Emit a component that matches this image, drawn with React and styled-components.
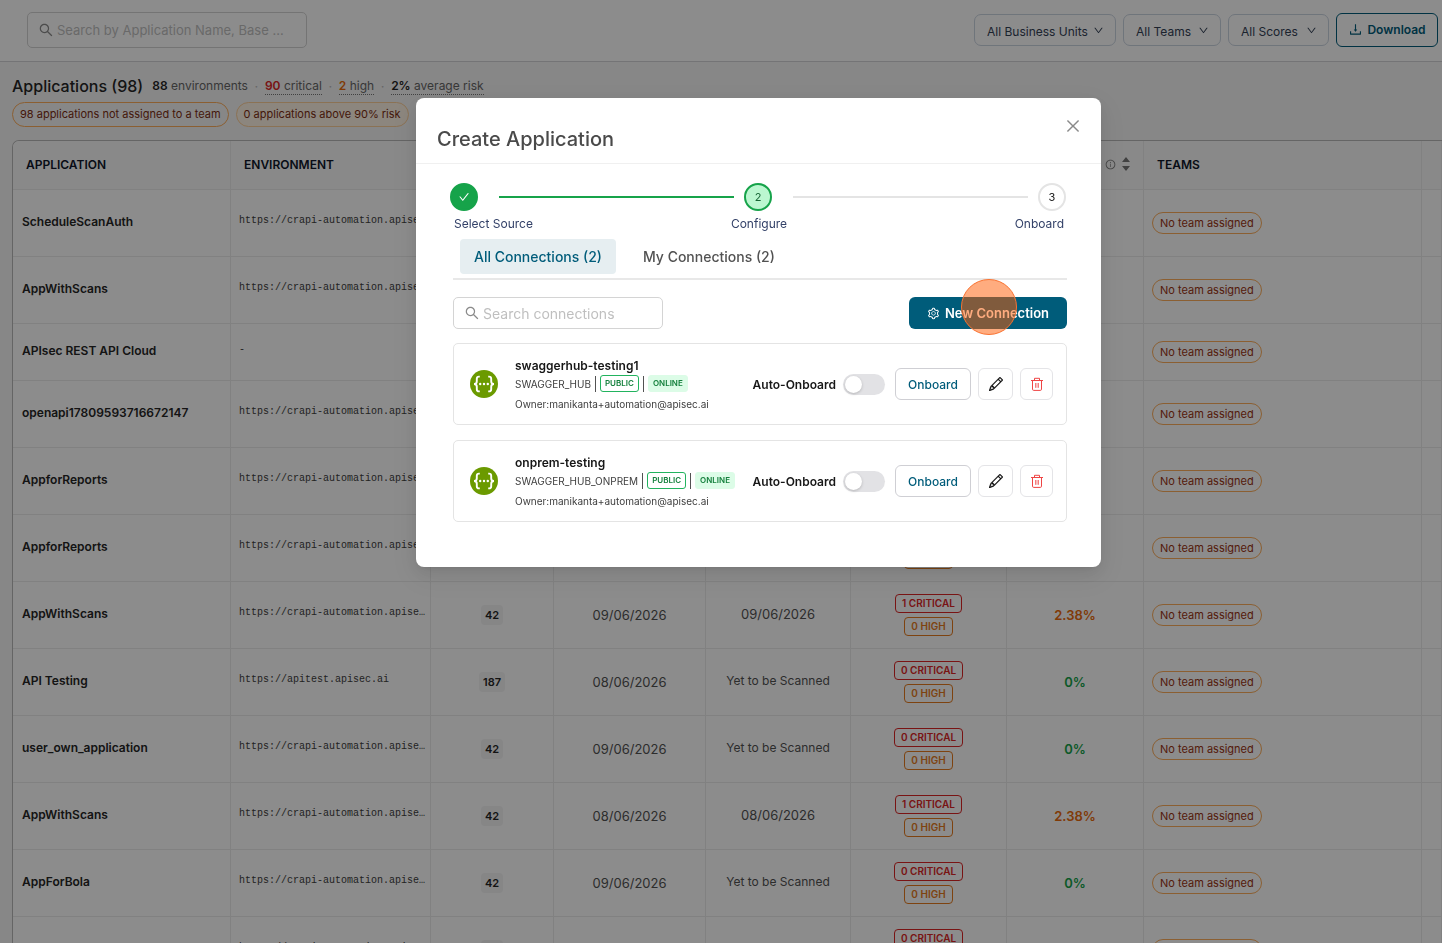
import React from 'react';
import {
  AiOutlineCheck,
  AiOutlineClose,
  AiOutlineDown,
  AiOutlineDownload,
  AiOutlineInfoCircle,
  AiOutlineSearch,
  AiOutlineSetting,
} from 'react-icons/ai';
import { BsPencil } from 'react-icons/bs';
import styled, { createGlobalStyle } from 'styled-components';

const GlobalStyle = createGlobalStyle`
  * {
    box-sizing: border-box;
  }
  body {
    margin: 0;
    background: #f6f6f6;
    color: #262626;
    font-family: Inter, 'Open Sans', sans-serif;
    font-size: 13px;
  }
  button, input, select {
    font-family: inherit;
  }
`;

const StyledPage = styled.div`
  height: 100vh;
  overflow: hidden;
`;

const StyledTopBar = styled.header`
  display: flex;
  align-items: center;
  justify-content: space-between;
  height: 62px;
  padding: 0 4px 2px 27px;
  background: #fff;
  border-bottom: 1px solid #d4d4d8;
`;

const StyledSearch = styled.label`
  display: flex;
  align-items: center;
  gap: 3px;
  width: ${({ $width }) => $width}px;
  height: ${({ $height }) => $height}px;
  padding: 0 10px;
  border: 1px solid #d4d4d4;
  border-radius: 5px;
  background: #fff;
  color: #8a8a8a;

  svg {
    flex: none;
  }
  input {
    flex: 1;
    min-width: 0;
    padding: 0;
    border: 0;
    outline: 0;
    background: transparent;
    font-size: ${({ $fontSize }) => $fontSize || 14}px;
  }
  input::placeholder {
    color: #bfbfbf;
  }
`;

const StyledFilters = styled.div`
  display: flex;
  align-items: center;
  gap: 7px;
`;

const StyledSelect = styled.div`
  position: relative;
  color: #334155;

  select {
    width: ${({ $width }) => $width}px;
    height: 32px;
    padding: 3px 12px 0;
    appearance: none;
    border: 1px solid #cbd5e1;
    border-radius: 7px;
    background: #fff;
    color: inherit;
    font-size: 12px;
  }
  svg {
    position: absolute;
    top: 11px;
    right: 12px;
    pointer-events: none;
  }
`;

const StyledDownload = styled.button`
  display: flex;
  align-items: center;
  justify-content: center;
  gap: 4px;
  width: 102px;
  height: 34px;
  padding: 0;
  border: 1px solid #005c7a;
  border-radius: 6px;
  background: #fff;
  color: #005c7a;
  font-size: 12px;
  font-weight: 600;
`;

const StyledSummary = styled.section`
  padding: 14px 12px 0;
`;

const StyledSummaryRow = styled.div`
  display: flex;
  align-items: center;
  height: 20px;

  h1 {
    margin: 0 9px 0 0;
    font-size: 16px;
    font-weight: 500;
  }
`;

const StyledStat = styled.span`
  color: #666;
  font-size: 12px;
  line-height: 16px;
  white-space: nowrap;
  border-bottom: 1px ${({ $plain }) => ($plain ? 'solid transparent' : 'dotted #777')};

  b {
    color: ${({ $color }) => $color || '#262626'};
    font-weight: 600;
  }
`;

const StyledDot = styled.span`
  width: 17px;
  color: #bbb;
  text-align: center;
`;

const StyledPills = styled.div`
  display: flex;
  gap: 7px;
  margin-top: 6px;
`;

const StyledPill = styled.span`
  display: inline-block;
  padding: 0 7px;
  border: 1px solid ${({ $soft }) => ($soft ? '#fdcf9a' : '#fdae5c')};
  border-radius: 13px;
  background: ${({ $soft }) => ($soft ? '#fff4e5' : 'transparent')};
  color: #7c2d12;
  font-size: 11px;
  line-height: 23px;
  white-space: nowrap;
`;

const StyledTableBox = styled.div`
  margin: 13px 0 0 12px;
  border: 1px solid #b8b8b8;
  border-right: 0;
  border-radius: 7px 0 0 0;
  background: #fff;
  overflow: hidden;
`;

const StyledTable = styled.table`
  width: 100%;
  table-layout: fixed;
  border-collapse: separate;
  border-spacing: 0;

  th {
    height: 49px;
    padding: 0 13px 2px;
    border-right: 1px solid #ececec;
    border-bottom: 1px solid #ececec;
    background: #fafafa;
    color: #0f172a;
    font-size: 12px;
    font-weight: 600;
    text-align: left;
    white-space: nowrap;
    overflow: hidden;
  }
  td {
    padding: 0 8px 1px;
    border-right: 1px solid #ececec;
    border-bottom: 1px solid #ececec;
    color: #525252;
    text-align: center;
    white-space: nowrap;
  }
  td:nth-child(-n + 2),
  td:nth-child(8) {
    text-align: left;
  }
`;

const StyledRow = styled.tr`
  height: ${({ $short }) => ($short ? 57 : 67)}px;
`;

const StyledName = styled.span`
  display: block;
  padding: 0 0 1px 1px;
  color: #262626;
  font-size: 12px;
  font-weight: 600;
  line-height: 18px;
`;

const StyledUrl = styled.span`
  display: block;
  padding-bottom: 3px;
  color: #404040;
  font-family: 'Liberation Mono', monospace;
  font-size: 10px;
  line-height: 16px;
`;

const StyledCount = styled.span`
  display: inline-block;
  padding: 0 4px;
  border-radius: 4px;
  background: #f4f4f5;
  color: #262626;
  font-size: 11px;
  font-weight: 600;
  line-height: 20px;
`;

const StyledScanned = styled.span`
  display: block;
  padding-bottom: 2px;
  font-size: ${({ $pending }) => ($pending ? 12 : 13)}px;
  line-height: 18px;
`;

const StyledSeverities = styled.div`
  display: flex;
  flex-direction: column;
  align-items: center;
  gap: 4px;
`;

const StyledSeverity = styled.span`
  padding: 0 6px 1px;
  border: 1px solid currentColor;
  border-radius: 4px;
  color: ${({ $critical }) => ($critical ? '#dc2626' : '#e57b1e')};
  font-size: 10px;
  font-weight: 600;
  line-height: 16px;
`;

const StyledRisk = styled.span`
  color: ${({ $high }) => ($high ? '#ea6a0c' : '#16a34a')};
  font-size: 13px;
  font-weight: 600;
`;

const StyledTeam = styled.span`
  display: inline-block;
  padding: 0 7px;
  border: 1px solid #fdae5c;
  border-radius: 11px;
  color: #9a3412;
  font-size: 11px;
  line-height: 20px;
`;

const StyledRiskHead = styled.span`
  display: flex;
  align-items: center;
  justify-content: flex-end;
  gap: 6px;
  color: #777;
`;

const StyledMask = styled.div`
  position: fixed;
  inset: 0;
  display: flex;
  align-items: flex-start;
  justify-content: center;
  padding: 98px 0 0 75px;
  background: rgba(0, 0, 0, 0.45);
`;

const StyledModal = styled.div`
  width: 685px;
  padding-bottom: 45px;
  border-radius: 8px;
  background: #fff;
  box-shadow: 0 6px 16px rgba(0, 0, 0, 0.08), 0 3px 6px -4px rgba(0, 0, 0, 0.12),
    0 9px 28px 8px rgba(0, 0, 0, 0.05);
`;

const StyledModalHeader = styled.div`
  display: flex;
  justify-content: space-between;
  height: 66px;
  padding: 19px 19px 0 21px;
  border-bottom: 1px solid #f0f0f0;

  h2 {
    margin: 8px 0 0;
    color: #4a4a4a;
    font-size: 20px;
    font-weight: 500;
    line-height: 28px;
  }
`;

const StyledClose = styled.button`
  display: flex;
  height: 18px;
  padding: 0;
  border: 0;
  background: none;
  color: #8a8a8a;
`;

const StyledModalBody = styled.div`
  padding: 19px 34px 0 37px;
`;

const StyledSteps = styled.div`
  display: flex;
  align-items: center;
  margin: 0 1px 0 -3px;
`;

const StyledStepCircle = styled.span`
  display: flex;
  flex: none;
  align-items: center;
  justify-content: center;
  width: 28px;
  height: 28px;
  border: 2px solid ${({ $state }) => ($state === 'todo' ? '#e4e4e4' : '#16a34a')};
  border-radius: 50%;
  background: ${({ $state }) => ({ done: '#16a34a', current: '#bbf7d0', todo: '#fff' })[$state]};
  color: ${({ $state }) => ({ done: '#fff', current: '#166534', todo: '#171717' })[$state]};
  font-size: 11px;
`;

const StyledStepLine = styled.span`
  flex: 1;
  height: 2px;
  margin: 0 10px 0 21px;
  background: ${({ $done }) => ($done ? '#16a34a' : '#e4e4e4')};
`;

const StyledStepLabels = styled.div`
  display: grid;
  grid-template-columns: 1fr auto 1fr;
  padding: 4px 3px 0 1px;
  color: #334168;
  font-size: 12px;
  line-height: 18px;

  span:last-child {
    text-align: right;
  }
`;

const StyledTabs = styled.div`
  display: flex;
  gap: 13px;
  padding: 6px 7px 4px;
  border-bottom: 2px solid #e8e8e8;
`;

const StyledTab = styled.button`
  height: 35px;
  padding: 0 14px;
  border: 0;
  border-radius: 4px;
  background: ${({ $active }) => ($active ? '#e6eef1' : 'none')};
  color: ${({ $active }) => ($active ? '#005c7a' : '#525252')};
  font-size: 14px;
  font-weight: 500;
`;

const StyledToolbar = styled.div`
  display: flex;
  justify-content: space-between;
  padding: 17px 0 14px;
`;

const StyledNewConnection = styled.div`
  position: relative;

  button {
    display: flex;
    align-items: center;
    justify-content: center;
    gap: 5px;
    width: 158px;
    height: 32px;
    padding: 0;
    border: 0;
    border-radius: 6px;
    background: #005c7a;
    color: #fff;
    font-size: 13px;
    font-weight: 600;
  }
`;

const StyledPointer = styled.span`
  position: absolute;
  top: -18px;
  left: 52px;
  width: 56px;
  height: 56px;
  border: 1px solid #f97332;
  border-radius: 50%;
  background: rgba(255, 89, 0, 0.5);
  pointer-events: none;
`;

const StyledCards = styled.div`
  display: flex;
  flex-direction: column;
  gap: 15px;
`;

const StyledCard = styled.article`
  display: flex;
  align-items: center;
  height: 82px;
  padding: 0 13px 0 16px;
  border: 1px solid #e4e4e4;
  border-radius: 5px;
`;

const StyledInfo = styled.div`
  flex: 1;
  margin-left: 17px;

  h3 {
    margin: 0;
    color: #171717;
    font-size: 12px;
    font-weight: 600;
    line-height: 18px;
  }
  p {
    margin: 3px 0 0;
    color: #404040;
    font-size: 10px;
    line-height: 16px;
  }
`;

const StyledMeta = styled.div`
  display: flex;
  align-items: center;
  gap: 4px;
  height: 18px;
  color: #404040;
  font-size: 10px;
  white-space: nowrap;
`;

const StyledDivider = styled.span`
  width: 1px;
  height: 16px;
  background: #525252;
`;

const StyledTag = styled.span`
  padding: 0 4px;
  border: 1px solid ${({ $filled }) => ($filled ? '#dcfce7' : '#22b35e')};
  border-radius: 3px;
  background: ${({ $filled }) => ($filled ? '#dcfce7' : '#fff')};
  color: #15803d;
  font-size: 8px;
  font-weight: 600;
  line-height: 15px;
`;

const StyledSwitch = styled.label`
  display: flex;
  align-items: center;
  gap: 7px;
  color: #171717;
  font-size: 12px;
  font-weight: 600;

  input {
    width: 42px;
    height: 21px;
    margin: 0;
    padding: 2px;
    appearance: none;
    border-radius: 11px;
    background: #e2e2e5;
  }
  input::before {
    content: '';
    display: block;
    width: 17px;
    height: 17px;
    border-radius: 50%;
    background: #fff;
    box-shadow: 0 1px 3px rgba(0, 0, 0, 0.2);
  }
  input:checked::before {
    margin-left: auto;
  }
`;

const StyledAction = styled.button`
  display: flex;
  align-items: center;
  justify-content: center;
  width: ${({ $width }) => $width}px;
  height: 32px;
  margin-left: ${({ $gap }) => $gap || 7}px;
  padding: 0;
  border: 1px solid ${({ $strong }) => ($strong ? '#cfcfd4' : '#e4e4e7')};
  border-radius: 6px;
  background: #fff;
  color: ${({ $color }) => $color};
  font-size: 12px;
  font-weight: 500;
`;

const URL = 'https://crapi-automation.apise…';

const columns = [218, 200, 123, 152, 145, 156, 137, 278];

const applications = [
  { name: 'ScheduleScanAuth', url: URL, count: 42, created: '09/06/2026', critical: 0 },
  { name: 'AppWithScans', url: URL, count: 42, created: '09/06/2026', critical: 0 },
  { name: 'APIsec REST API Cloud', url: '-', count: 42, created: '09/06/2026', critical: 0, short: true },
  { name: 'openapi17809593716672147', url: URL, count: 42, created: '09/06/2026', critical: 0 },
  { name: 'AppforReports', url: URL, count: 42, created: '09/06/2026', critical: 0 },
  { name: 'AppforReports', url: URL, count: 42, created: '09/06/2026', critical: 0 },
  { name: 'AppWithScans', url: URL, count: 42, created: '09/06/2026', scanned: '09/06/2026', critical: 1 },
  { name: 'API Testing', url: 'https://apitest.apisec.ai', count: 187, created: '08/06/2026', critical: 0 },
  { name: 'user_own_application', url: URL, count: 42, created: '09/06/2026', critical: 0 },
  { name: 'AppWithScans', url: URL, count: 42, created: '08/06/2026', scanned: '08/06/2026', critical: 1 },
  { name: 'AppForBola', url: URL, count: 42, created: '09/06/2026', critical: 0 },
  { name: 'AppForBola', url: URL, count: 42, created: '09/06/2026', critical: 0 },
];

const connections = [
  { name: 'swaggerhub-testing1', type: 'SWAGGER_HUB' },
  { name: 'onprem-testing', type: 'SWAGGER_HUB_ONPREM' },
];

const SwaggerLogo = () => (
  <svg width="28" height="28" viewBox="0 0 28 28" aria-hidden="true">
    <circle cx="14" cy="14" r="14" fill="#6b9a00" />
    <g fill="none" stroke="#fff" strokeWidth="1.9">
      <path d="M9.8 6.6H9Q6.8 6.6 6.8 8.8V11.2Q6.8 14 4 14Q6.8 14 6.8 16.8V19.2Q6.8 21.4 9 21.4H9.8" />
      <path d="M18.2 6.6H19Q21.2 6.6 21.2 8.8V11.2Q21.2 14 24 14Q21.2 14 21.2 16.8V19.2Q21.2 21.4 19 21.4H18.2" />
    </g>
    <g fill="#fff">
      <circle cx="10.2" cy="14" r="1.2" />
      <circle cx="14" cy="14" r="1.2" />
      <circle cx="17.8" cy="14" r="1.2" />
    </g>
  </svg>
);

const TrashIcon = () => (
  <svg width="14" height="14" viewBox="0 0 14 14" fill="none" stroke="currentColor" aria-hidden="true">
    <path d="M1 3.5H13M4.5 3.5V1.3H9.5V3.5M2.5 3.5V12.2Q2.5 13.4 3.7 13.4H10.3Q11.5 13.4 11.5 12.2V3.5" />
    <path d="M5.5 6V10.8M7 6V10.8M8.5 6V10.8" strokeWidth="0.7" />
  </svg>
);

const SortIcon = () => (
  <svg width="8" height="14" viewBox="0 0 8 14" fill="currentColor" aria-hidden="true">
    <path d="M4 0L8 5H0ZM4 14L0 9H8Z" />
  </svg>
);

const Filter = ({ label, width }) => (
  <StyledSelect $width={width}>
    <select aria-label={label}>
      <option>{label}</option>
    </select>
    <AiOutlineDown size={11} />
  </StyledSelect>
);

const ApplicationRow = ({ app }) => (
  <StyledRow $short={app.short}>
    <td>
      <StyledName>{app.name}</StyledName>
    </td>
    <td>
      <StyledUrl>{app.url}</StyledUrl>
    </td>
    <td>
      <StyledCount>{app.count}</StyledCount>
    </td>
    <td>{app.created}</td>
    <td>
      <StyledScanned $pending={!app.scanned}>{app.scanned || 'Yet to be Scanned'}</StyledScanned>
    </td>
    <td>
      <StyledSeverities>
        <StyledSeverity $critical>{app.critical} CRITICAL</StyledSeverity>
        <StyledSeverity>0 HIGH</StyledSeverity>
      </StyledSeverities>
    </td>
    <td>
      <StyledRisk $high={app.critical > 0}>{app.critical > 0 ? '2.38%' : '0%'}</StyledRisk>
    </td>
    <td>
      <StyledTeam>No team assigned</StyledTeam>
    </td>
    <td />
  </StyledRow>
);

const ConnectionCard = ({ connection }) => (
  <StyledCard>
    <SwaggerLogo />
    <StyledInfo>
      <h3>{connection.name}</h3>
      <StyledMeta>
        {connection.type}
        <StyledDivider />
        <StyledTag>PUBLIC</StyledTag>
        <StyledDivider />
        <StyledTag $filled>ONLINE</StyledTag>
      </StyledMeta>
      <p>Owner:manikanta+automation@apisec.ai</p>
    </StyledInfo>
    <StyledSwitch>
      Auto-Onboard
      <input type="checkbox" role="switch" />
    </StyledSwitch>
    <StyledAction $width={76} $gap={10} $color="#005c7a" $strong>
      Onboard
    </StyledAction>
    <StyledAction $width={35} $color="#000" aria-label="Edit">
      <BsPencil size={14} strokeWidth={0.4} />
    </StyledAction>
    <StyledAction $width={33} $color="#ef4444" aria-label="Delete">
      <TrashIcon />
    </StyledAction>
  </StyledCard>
);

const App = () => (
  <>
    <GlobalStyle />
    <StyledPage>
      <StyledTopBar>
        <StyledSearch $width={280} $height={36} $fontSize={13}>
          <AiOutlineSearch size={16} />
          <input placeholder="Search by Application Name, Base ..." aria-label="Search applications" />
        </StyledSearch>
        <StyledFilters>
          <Filter label="All Business Units" width={142} />
          <Filter label="All Teams" width={98} />
          <Filter label="All Scores" width={101} />
          <StyledDownload>
            <AiOutlineDownload size={15} />
            Download
          </StyledDownload>
        </StyledFilters>
      </StyledTopBar>

      <StyledSummary>
        <StyledSummaryRow>
          <h1>Applications (98)</h1>
          <StyledStat $plain>
            <b>88</b> environments
          </StyledStat>
          <StyledDot>·</StyledDot>
          <StyledStat $color="#dc2626">
            <b>90</b> critical
          </StyledStat>
          <StyledDot>·</StyledDot>
          <StyledStat $color="#ea6a0c">
            <b>2</b> high
          </StyledStat>
          <StyledDot>·</StyledDot>
          <StyledStat>
            <b>2%</b> average risk
          </StyledStat>
        </StyledSummaryRow>
        <StyledPills>
          <StyledPill>98 applications not assigned to a team</StyledPill>
          <StyledPill $soft>0 applications above 90% risk</StyledPill>
        </StyledPills>
      </StyledSummary>

      <StyledTableBox>
        <StyledTable>
          <colgroup>
            {columns.map((width, index) => (
              <col key={index} width={width} />
            ))}
            <col />
          </colgroup>
          <thead>
            <tr>
              <th>APPLICATION</th>
              <th>ENVIRONMENT</th>
              <th />
              <th />
              <th />
              <th />
              <th>
                <StyledRiskHead>
                  <AiOutlineInfoCircle size={11} />
                  <SortIcon />
                </StyledRiskHead>
              </th>
              <th>TEAMS</th>
              <th />
            </tr>
          </thead>
          <tbody>
            {applications.map((app, index) => (
              <ApplicationRow key={index} app={app} />
            ))}
          </tbody>
        </StyledTable>
      </StyledTableBox>
    </StyledPage>

    <StyledMask>
      <StyledModal role="dialog" aria-label="Create Application">
        <StyledModalHeader>
          <h2>Create Application</h2>
          <StyledClose aria-label="Close">
            <AiOutlineClose size={18} />
          </StyledClose>
        </StyledModalHeader>
        <StyledModalBody>
          <StyledSteps>
            <StyledStepCircle $state="done">
              <AiOutlineCheck size={12} />
            </StyledStepCircle>
            <StyledStepLine $done />
            <StyledStepCircle $state="current">2</StyledStepCircle>
            <StyledStepLine />
            <StyledStepCircle $state="todo">3</StyledStepCircle>
          </StyledSteps>
          <StyledStepLabels>
            <span>Select Source</span>
            <span>Configure</span>
            <span>Onboard</span>
          </StyledStepLabels>
          <StyledTabs>
            <StyledTab $active>All Connections (2)</StyledTab>
            <StyledTab>My Connections (2)</StyledTab>
          </StyledTabs>
          <StyledToolbar>
            <StyledSearch $width={210} $height={32}>
              <AiOutlineSearch size={16} />
              <input placeholder="Search connections" aria-label="Search connections" />
            </StyledSearch>
            <StyledNewConnection>
              <button>
                <AiOutlineSetting size={13} />
                New Connection
              </button>
              <StyledPointer />
            </StyledNewConnection>
          </StyledToolbar>
          <StyledCards>
            {connections.map((connection) => (
              <ConnectionCard key={connection.name} connection={connection} />
            ))}
          </StyledCards>
        </StyledModalBody>
      </StyledModal>
    </StyledMask>
  </>
);

export default App;
